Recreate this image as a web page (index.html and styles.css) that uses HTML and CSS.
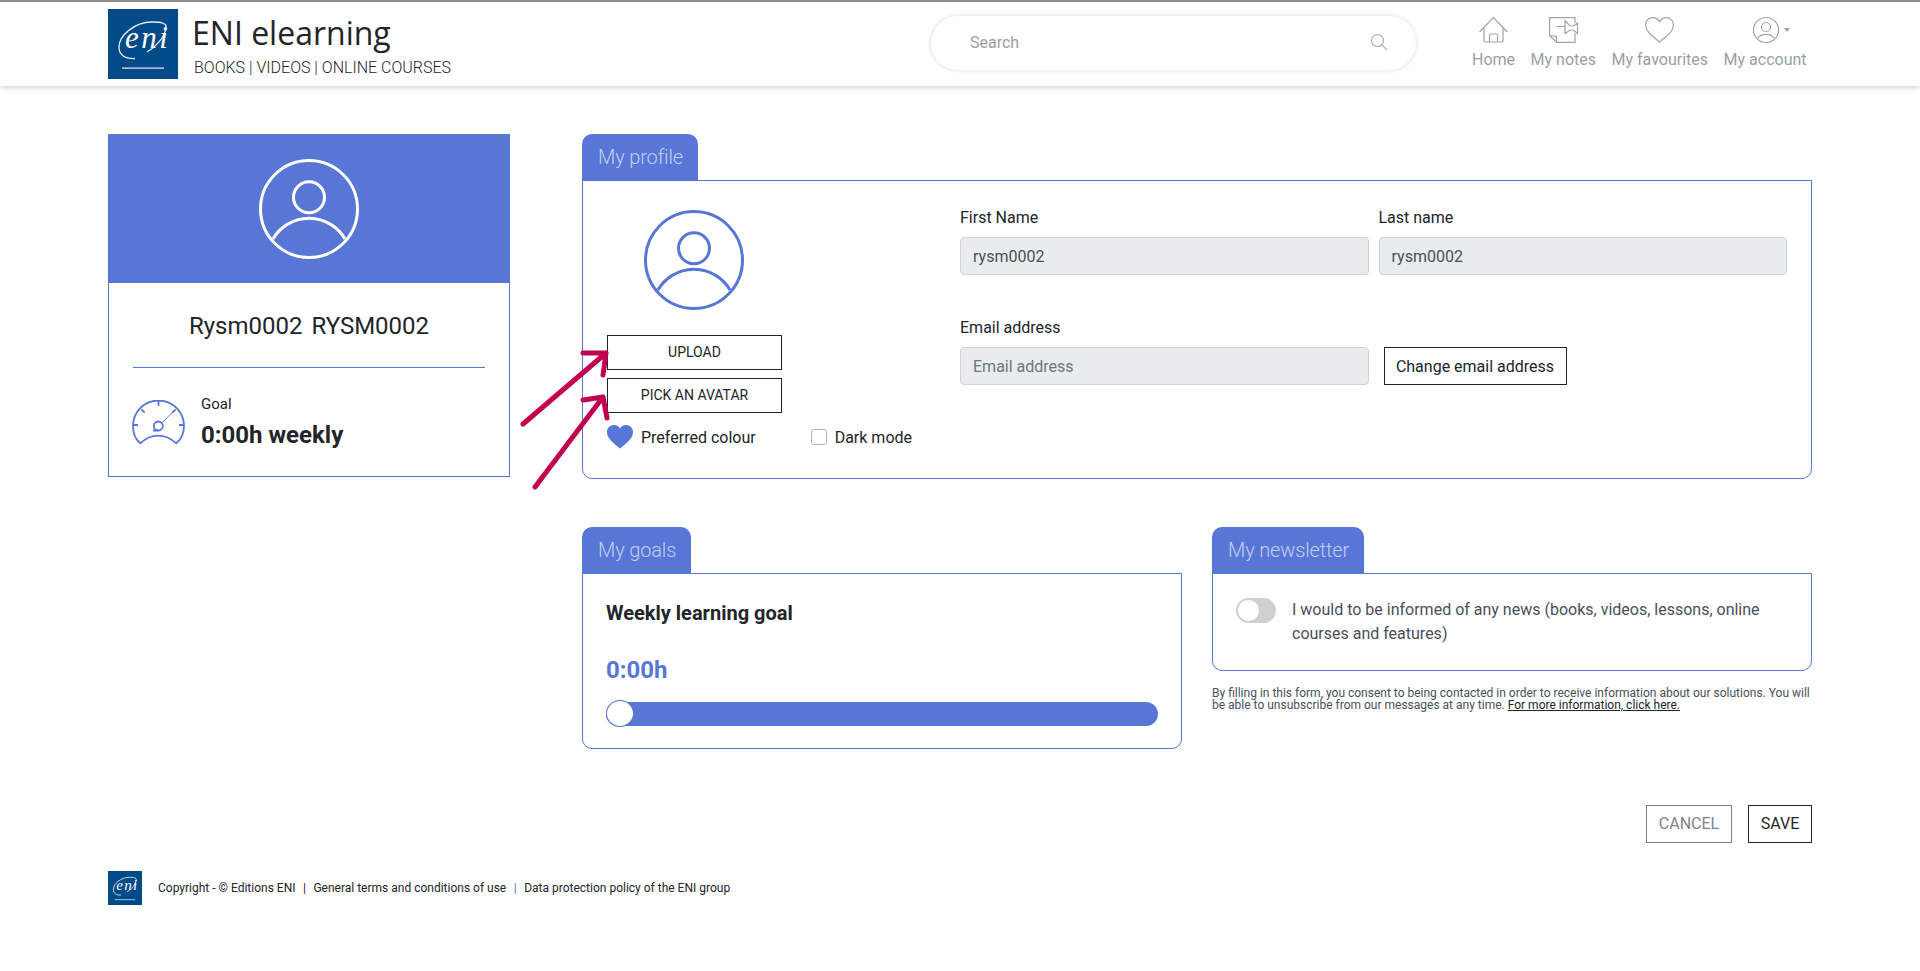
FILE: index.html
```html
<!DOCTYPE html>
<html lang="en">
<head>
<meta charset="utf-8">
<title>ENI elearning</title>
<link rel="stylesheet" href="styles.css">
</head>
<body>
<header class="topbar">
  <div class="brand">
    <svg class="logo" viewBox="0 0 70 70"><rect width="70" height="70" fill="#004a87"/><path d="M27 49.500C17 50 11 46 11 38 11 27 26 13 44 13c9 0 15 1 14 5.500C57 28 48 38 39 43" fill="none" stroke="#e4ecf5" stroke-width="1.300"/><text x="17" y="39" class="logo-text">eni</text><rect x="14" y="58.500" width="42" height="1.200" fill="#e6edf5"/></svg>
    <div class="brand-text">
      <div class="brand-name">ENI elearning</div>
      <div class="brand-sub">BOOKS | VIDEOS | ONLINE COURSES</div>
    </div>
  </div>
  <div class="search">
    <span>Search</span>
    <svg class="search-icon" viewBox="0 0 16 16"><circle cx="6.500" cy="6.500" r="6"/><path d="M10.800 10.800L16 16"/></svg>
  </div>
  <nav class="nav">
    <a class="nav-item"><svg viewBox="0 0 29 26"><path d="M.5 15L14.300.5 28.500 15M5 10v14a1 1 0 0 0 1 1h17a1 1 0 0 0 1-1V10M10.500 25v-7a1 1 0 0 1 1-1h6a1 1 0 0 1 1 1v7"/></svg>Home</a>
    <a class="nav-item"><svg viewBox="0 0 29 26"><path d="M26 6V.6H.6V18.500L7.500 25.400H26V16M1 18.500l6.500 1v5.500M7.500 9.500H16M16 3.500V16.500l5-3.500h3.500l4 3.500V6l-4 3h-3.500z"/></svg>My notes</a>
    <a class="nav-item"><svg viewBox="0 0 29 26"><path d="M14.500 25C8 19.500.6 15 .6 7.800.6 3.500 3.800.6 7.800.6c3 0 5.300 1.500 6.700 4.200C15.900 2.100 18.200.6 21.200.6c4 0 7.200 2.900 7.200 7.200C28.400 15 21 19.500 14.500 25z"/></svg>My favourites</a>
    <a class="nav-item"><span class="acct"><svg class="acct-icon" viewBox="0 0 26 26"><circle cx="13" cy="13" r="12.500"/><circle cx="13" cy="10" r="4.500"/><path d="M4.500 21.500c3.500-5.500 13.500-5.500 17 0"/></svg><i class="caret"></i></span>My account</a>
  </nav>
</header>

<main class="page">
  <aside class="summary">
    <div class="summary-head">
      <svg class="avatar avatar-lg" viewBox="0 0 100 100"><circle cx="50" cy="50" r="48.500"/><circle cx="50" cy="38.300" r="15.500"/><path d="M14 80A41.600 41.600 0 0 1 86 80"/></svg>
    </div>
    <div class="summary-name">Rysm0002 RYSM0002</div>
    <div class="summary-goal">
      <svg class="gauge" viewBox="0 0 53 44"><path d="M8.300 43.300C3 39 1 32 1 26A25.500 25.500 0 0 1 52 26C52 32 49.600 39 44.300 43.300 33 33 19 33 8.300 43.300z"/><path d="M26.500 1v5M9.300 9.300l3.400 3.400M43.700 9.300l-3.400 3.400M1 25h5M47 25h5M21 30.500h5"/><path class="needle" d="M30 22.700L41.700 11"/><circle cx="26.300" cy="26" r="4.500"/></svg>
      <div>
        <div class="goal-label">Goal</div>
        <div class="goal-value">0:00h weekly</div>
      </div>
    </div>
  </aside>

  <div class="content">
    <section class="panel">
      <h2 class="tab">My profile</h2>
      <div class="box box-profile">
        <div class="photo-col">
          <svg class="avatar avatar-md" viewBox="0 0 100 100"><circle cx="50" cy="50" r="48.500"/><circle cx="50" cy="38.300" r="15.500"/><path d="M14 80A41.600 41.600 0 0 1 86 80"/></svg>
          <button class="btn-photo">UPLOAD</button>
          <button class="btn-photo">PICK AN AVATAR</button>
          <div class="prefs">
            <span class="pref"><svg class="heart" viewBox="0 0 26 24"><path d="M13 23.500C5 17 0 13 0 7 0 3 3 0 7 0c2.700 0 4.800 1.300 6 3.500C14.200 1.300 16.300 0 19 0c4 0 7 3 7 7 0 6-5 10-13 16.500z"/></svg>Preferred colour</span>
            <span class="pref pref-dark"><i class="check"></i>Dark mode</span>
          </div>
        </div>
        <div class="form">
          <div class="form-row">
            <label class="field">First Name<span class="input">rysm0002</span></label>
            <label class="field">Last name<span class="input">rysm0002</span></label>
          </div>
          <div class="form-row">
            <label class="field">Email address<span class="input input-ph">Email address</span></label>
            <div class="field field-btn"><button class="btn-email">Change email address</button></div>
          </div>
        </div>
      </div>
    </section>

    <div class="lower">
      <section class="panel">
        <h2 class="tab">My goals</h2>
        <div class="box box-goals">
          <div class="weekly">Weekly learning goal</div>
          <div class="hours">0:00h</div>
          <div class="slider"><i class="thumb"></i></div>
        </div>
      </section>
      <section class="panel">
        <h2 class="tab">My newsletter</h2>
        <div class="box box-news">
          <i class="toggle"><b></b></i>
          <p>I would to be informed of any news (books, videos, lessons, online courses and features)</p>
        </div>
        <p class="legal">By filling in this form, you consent to being contacted in order to receive information about our solutions. You will be able to unsubscribe from our messages at any time. <u>For more information, click here.</u></p>
      </section>
    </div>

    <div class="actions">
      <button class="btn-cancel">CANCEL</button>
      <button class="btn-save">SAVE</button>
    </div>
  </div>

  <svg class="arrows" viewBox="0 0 100 160"><path d="M3 84L86 13M63 13H86L83 35M15 147L83 57M63 60L83 57 87 78"/></svg>
</main>

<footer class="footer">
  <svg class="logo-sm" viewBox="0 0 70 70"><rect width="70" height="70" fill="#004a87"/><path d="M27 49.500C17 50 11 46 11 38 11 27 26 13 44 13c9 0 15 1 14 5.500C57 28 48 38 39 43" fill="none" stroke="#e4ecf5" stroke-width="1.800"/><text x="17" y="39" class="logo-text">eni</text><rect x="14" y="58" width="42" height="2" fill="#a9c0d8"/></svg>
  <span>Copyright - © Editions ENI</span><span class="sep">|</span><span>General terms and conditions of use</span><span class="sep sep-blue">|</span><span>Data protection policy of the ENI group</span>
</footer>
</body>
</html>
```
FILE: styles.css
```css
* { box-sizing: border-box; }
html, body { margin: 0; padding: 0; }
body { font-family: Roboto, "Liberation Sans", sans-serif; color: #212529; background: #fff; font-size: 16px; height: 971px; overflow: hidden; }
button { font-family: inherit; background: #fff; cursor: pointer; padding: 0; }

.topbar { height: 86px; border-top: 2px solid #8c8c8c; background: #fff; box-shadow: 0 2px 5px rgba(0,0,0,.16); display: flex; align-items: flex-start; padding-left: 108px; position: relative; }
.brand { display: flex; gap: 16px; padding-top: 7px; width: 823px; flex: none; }
.logo { width: 70px; height: 70px; display: block; }
.logo-text { font-family: "Liberation Serif", serif; font-style: italic; font-size: 31px; fill: #fff; letter-spacing: 2.500px; }
.brand-name { font-family: "Open Sans", sans-serif; font-size: 32px; line-height: 40px; margin: 4px 0 0 -2px; color: #212529; }
.brand-sub { font-size: 16px; font-weight: 300; line-height: 20px; margin-top: 5px; color: #212529; }
.search { width: 485px; height: 54px; margin-top: 14px; border-radius: 27px; background: #fff; box-shadow: 0 0 5px rgba(0,0,0,.15); display: flex; align-items: center; justify-content: space-between; padding: 0 29px 2px 39px; color: #9a9fa5; font-size: 16px; flex: none; }
.search-icon { width: 16px; height: 16px; fill: none; stroke: #a9aeb3; stroke-width: 1.100; overflow: visible; }
.nav { display: flex; margin-left: 56px; gap: 15.500px; color: #9a9fa5; font-size: 16px; padding-top: 15px; }
.nav-item { display: flex; flex-direction: column; align-items: center; line-height: 19px; gap: 7px; }
.nav-item svg { width: 29px; height: 26px; fill: none; stroke: #9fa4aa; stroke-width: 1.200; display: block; overflow: visible; }
.nav-item .acct-icon { width: 26px; }
.acct { display: flex; align-items: center; gap: 5px; margin-left: 13px; }
.caret { width: 0; height: 0; border: 3.500px solid transparent; border-top: 4px solid #9fa4aa; border-bottom: 0; }

.page { padding: 48px 108px 0; display: flex; gap: 72px; align-items: flex-start; position: relative; }
.summary { width: 402px; height: 343px; border: 1px solid #5876d6; flex: none; }
.summary-head { height: 149px; margin: -1px -1px 0; background: #5876d6; display: flex; align-items: center; justify-content: center; }
.avatar { fill: none; stroke-width: 3; width: 100px; height: 100px; display: block; }
.avatar-lg { stroke: #fff; }
.summary-name { font-size: 24px; word-spacing: 3px; line-height: 30px; text-align: center; margin: 0 24px; padding: 28px 0 26px; border-bottom: 1px solid #5876d6; }
.summary-goal { display: flex; align-items: center; gap: 16px; padding: 27px 23px 0; }
.gauge { width: 53px; height: 44px; fill: none; stroke: #5876d6; stroke-width: 1.800; flex: none; }
.gauge .needle { stroke-width: 1; }
.goal-label { font-size: 15px; line-height: 18px; margin-bottom: 9px; }
.goal-value { font-size: 24px; line-height: 26px; font-weight: 700; }

.content { flex: 1; display: flex; flex-direction: column; min-width: 0; }
.panel { display: flex; flex-direction: column; align-items: flex-start; min-width: 0; }
.tab { margin: 0; height: 47px; padding: 0 15px 0 16px; background: #5876d6; border-radius: 10px 10px 0 0; color: #c3cff2; font-size: 20px; font-weight: 300; letter-spacing: -.15px; line-height: 46px; white-space: nowrap; }
.box { width: 100%; border: 1px solid #5876d6; border-radius: 0 0 10px 10px; background: #fff; margin-top: -1px; }

.box-profile { height: 299px; display: flex; padding: 24px 24px 0; gap: 50px; }
.photo-col { width: 303px; flex: none; display: flex; flex-direction: column; align-items: flex-start; padding-top: 5px; }
.avatar-md { stroke: #5876d6; margin-left: 37px; margin-bottom: 25px; flex: none; }
.btn-photo { width: 175px; height: 35px; border: 1px solid #212529; padding-bottom: 1px; font-size: 14px; color: #212529; margin-bottom: 8px; flex: none; }
.prefs { display: flex; align-items: center; margin-top: 4px; font-size: 16px; white-space: nowrap; }
.pref { display: flex; align-items: center; gap: 8px; }
.heart { width: 26px; height: 24px; fill: #5876d6; flex: none; }
.pref-dark { margin-left: 55px; }
.check { width: 16px; height: 16px; border: 1px solid #adb5bd; border-radius: 3px; display: block; flex: none; }
.form { flex: 1; display: flex; flex-direction: column; gap: 40px; min-width: 0; }
.form-row { display: grid; grid-template-columns: 1fr 1fr; gap: 10px; }
.field { display: flex; flex-direction: column; gap: 7px; padding-top: 1px; font-size: 16px; line-height: 24px; min-width: 0; }
.input { display: block; height: 38px; background: #e9ecef; border: 1px solid #ced4da; border-radius: 4px; padding: 0 12px; line-height: 38px; color: #495057; }
.input-ph { color: #6c757d; }
.field-btn { flex-direction: row; align-items: flex-end; padding-left: 5px; }
.btn-email { height: 38px; width: 183px; border: 1px solid #212529; font-size: 16px; color: #212529; }

.lower { display: grid; grid-template-columns: 600px 600px; gap: 30px; margin-top: 48px; }
.box-goals { height: 176px; padding: 27px 23px 0; }
.weekly { font-size: 20px; font-weight: 700; line-height: 24px; }
.hours { font-size: 24px; font-weight: 700; color: #5876d6; line-height: 28px; margin-top: 31px; }
.slider { height: 24px; border-radius: 12px; background: #5876d6; margin-top: 18px; position: relative; }
.thumb { position: absolute; left: 0; top: -2px; width: 28px; height: 27px; border-radius: 50%; background: #fff; border: 1px solid #5876d6; }
.box-news { height: 98px; display: flex; padding: 24px 23px 0; gap: 16px; align-items: flex-start; }
.box-news p { margin: 0; font-size: 16px; line-height: 24px; color: #495057; }
.toggle { flex: none; width: 40px; height: 25px; border-radius: 13px; background: #d0d0d0; display: block; padding: 2px; }
.toggle b { display: block; width: 21px; height: 21px; border-radius: 50%; background: #fff; }
.legal { margin: 16px 0 0; font-size: 12px; line-height: 12px; color: #495057; }
.legal u { color: #212529; }

.actions { display: flex; justify-content: flex-end; gap: 16px; margin-top: 56px; }
.btn-cancel, .btn-save { height: 38px; padding-bottom: 1px; font-size: 16px; }
.btn-cancel { width: 86px; border: 1px solid #7c7c7c; color: #7e8388; }
.btn-save { width: 64px; border: 1px solid #212529; color: #212529; }

.arrows { position: absolute; left: 520px; top: 254px; width: 100px; height: 160px; fill: none; stroke: #c2004f; stroke-width: 5; stroke-linecap: round; stroke-linejoin: round; pointer-events: none; }

.footer { display: flex; align-items: center; margin-top: 28px; padding-left: 108px; font-size: 12px; color: #212529; white-space: nowrap; }
.logo-sm { width: 34px; height: 34px; display: block; margin-right: 16px; flex: none; }
.sep { margin: 0 7.500px; }
.sep-blue { color: #5876d6; }
```
